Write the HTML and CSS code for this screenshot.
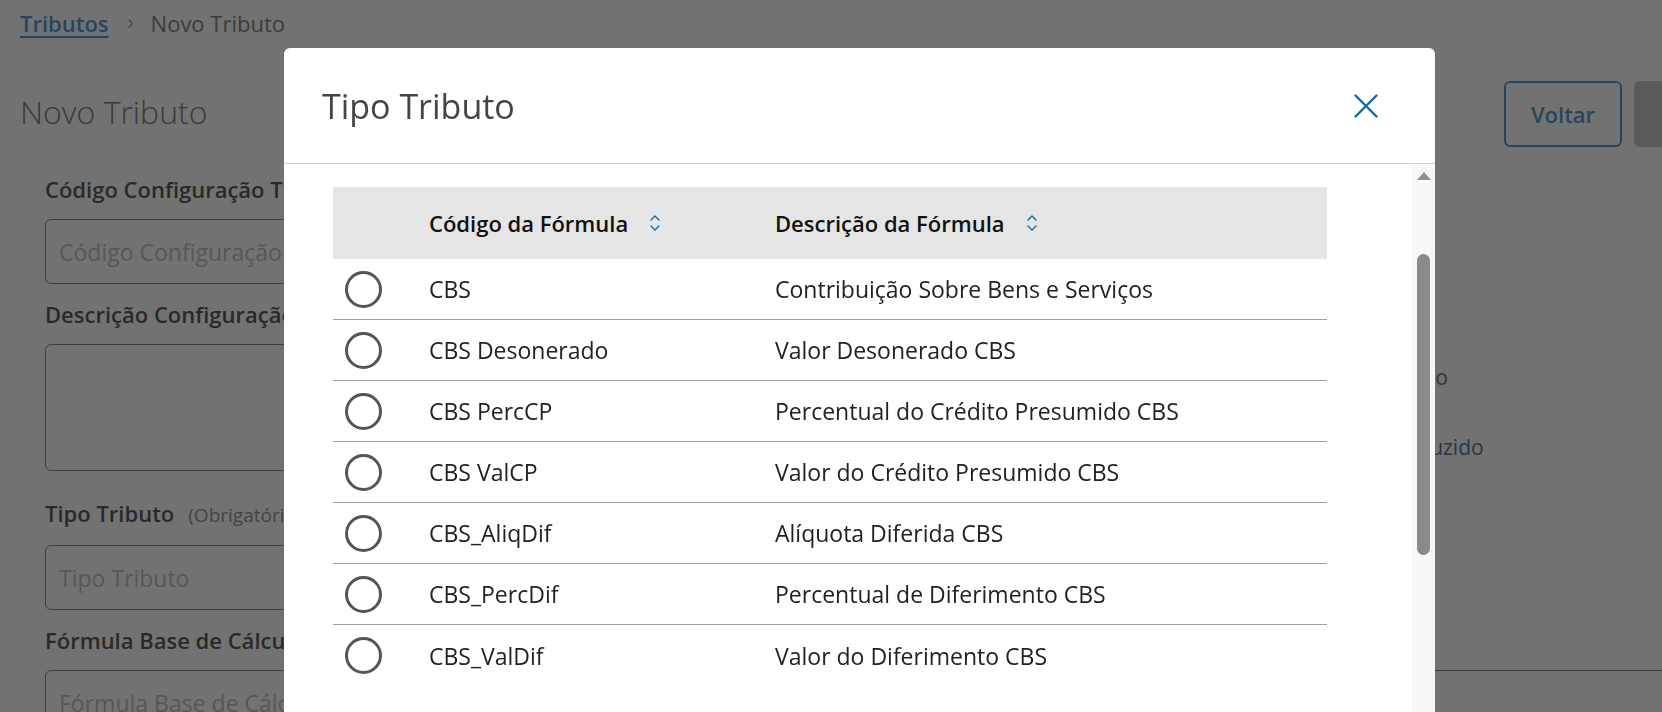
FILE: index.html
```html
<!DOCTYPE html>
<html lang="pt-BR">
<head>
<meta charset="utf-8">
<title>Novo Tributo</title>
<link rel="stylesheet" href="styles.css">
</head>
<body>
<div class="page">
  <nav class="breadcrumb">
    <a class="crumb-link" href="#">Tributos</a>
    <svg class="crumb-sep" width="7" height="11" viewBox="0 0 7 11"><path d="M1.5 1.5 L5.5 5.5 L1.5 9.5" fill="none" stroke="#8a8a8a" stroke-width="1.5"/></svg>
    <span class="crumb-current">Novo Tributo</span>
  </nav>
  <header class="page-head">
    <h1 class="page-title">Novo Tributo</h1>
    <div class="actions">
      <button class="btn btn-outline" type="button">Voltar</button>
      <button class="btn btn-solid" type="button">Salvar</button>
    </div>
  </header>
  <form class="form">
    <div class="form-row">
      <div class="form-col">
        <div class="field">
          <label class="field-label">Código Configuração Tributo</label>
          <input class="input" placeholder="Código Configuração Tributo">
        </div>
        <div class="field field-spaced">
          <label class="field-label">Descrição Configuração Tributo</label>
          <textarea class="input textarea"></textarea>
        </div>
        <div class="field">
          <label class="field-label">Tipo Tributo<span class="optional">(Obrigatório)</span></label>
          <input class="input" placeholder="Tipo Tributo">
        </div>
      </div>
      <div class="form-col side">
        <span class="field-label">Cálculo</span>
        <div class="options">
          <label class="option"><span class="option-dot"></span>Cálculo Pleno</label>
          <label class="option"><span class="option-dot"></span>Cálculo Reduzido</label>
        </div>
      </div>
    </div>
    <div class="field field-full">
      <label class="field-label">Fórmula Base de Cálculo</label>
      <input class="input" placeholder="Fórmula Base de Cálculo">
    </div>
  </form>
</div>

<div class="overlay"></div>

<section class="modal" role="dialog" aria-label="Tipo Tributo">
  <header class="modal-head">
    <h2 class="modal-title">Tipo Tributo</h2>
    <button class="modal-close" type="button" aria-label="Fechar">
      <svg width="24" height="24" viewBox="0 0 24 24"><path d="M1.5 1.5 L22.5 22.5 M22.5 1.5 L1.5 22.5" stroke="#0b69a3" stroke-width="2.3" stroke-linecap="round" fill="none"/></svg>
    </button>
  </header>
  <div class="modal-body">
    <div class="modal-content">
      <div class="table">
        <div class="thead row-grid">
          <div></div>
          <div class="th">Código da Fórmula
            <svg class="sort" width="10" height="18" viewBox="0 0 10 18"><path d="M1 6 L5 2 L9 6 M1 12 L5 16 L9 12" fill="none" stroke="#0b69a3" stroke-width="1.3" stroke-linecap="round" stroke-linejoin="round"/></svg>
          </div>
          <div class="th">Descrição da Fórmula
            <svg class="sort" width="10" height="18" viewBox="0 0 10 18"><path d="M1 6 L5 2 L9 6 M1 12 L5 16 L9 12" fill="none" stroke="#0b69a3" stroke-width="1.3" stroke-linecap="round" stroke-linejoin="round"/></svg>
          </div>
        </div>
        <div class="tr row-grid"><span class="radio"></span><span class="td">CBS</span><span class="td">Contribuição Sobre Bens e Serviços</span></div>
        <div class="tr row-grid"><span class="radio"></span><span class="td">CBS Desonerado</span><span class="td">Valor Desonerado CBS</span></div>
        <div class="tr row-grid"><span class="radio"></span><span class="td">CBS PercCP</span><span class="td">Percentual do Crédito Presumido CBS</span></div>
        <div class="tr row-grid"><span class="radio"></span><span class="td">CBS ValCP</span><span class="td">Valor do Crédito Presumido CBS</span></div>
        <div class="tr row-grid"><span class="radio"></span><span class="td">CBS_AliqDif</span><span class="td">Alíquota Diferida CBS</span></div>
        <div class="tr row-grid"><span class="radio"></span><span class="td">CBS_PercDif</span><span class="td">Percentual de Diferimento CBS</span></div>
        <div class="tr row-grid"><span class="radio"></span><span class="td">CBS_ValDif</span><span class="td">Valor do Diferimento CBS</span></div>
      </div>
    </div>
    <div class="scrollbar">
      <span class="scroll-arrow"></span>
      <span class="scroll-thumb"></span>
    </div>
  </div>
</section>
</body>
</html>
```

FILE: styles.css
```css
* { box-sizing: border-box; }

html, body {
  margin: 0;
  height: 100%;
  overflow: hidden;
}

body {
  font-family: "Open Sans", "Noto Sans", sans-serif;
  background: #fff;
  color: #333;
}

/* ---------- underlying page ---------- */
.page {
  width: 1804px;
  padding: 7px 20px 0;
}

.breadcrumb {
  display: flex;
  align-items: center;
  height: 32px;
  font-size: 22px;
  line-height: 32px;
}

.crumb-link {
  color: #2a7fc0;
  font-weight: 600;
  text-decoration: underline;
  text-decoration-thickness: 2px;
  text-underline-offset: 4px;
}

.crumb-sep { margin: 0 17px 0 18px; }

.crumb-current { color: #666; }

.page-head {
  display: flex;
  align-items: center;
  justify-content: space-between;
  margin-top: 42px;
}

.page-title {
  margin: 0;
  padding-bottom: 6px;
  font-size: 32px;
  font-weight: 300;
  line-height: 45px;
  color: #5e5e5e;
}

.actions {
  display: flex;
  gap: 12px;
}

.btn {
  width: 118px;
  height: 66px;
  border-radius: 6px;
  font: 600 22px "Open Sans", sans-serif;
}

.btn-outline {
  background: #fff;
  border: 2px solid #2a7fc0;
  color: #2a7fc0;
}

.btn-solid {
  width: 150px;
  background: #bababa;
  border: 0;
  color: #fff;
}

.form {
  margin: 27px 0 0;
  padding: 0 25px;
}

.form-row {
  display: grid;
  grid-template-columns: 1196px 1fr;
  gap: 40px;
}

.form-col {
  display: flex;
  flex-direction: column;
  gap: 15px;
}

.field {
  display: flex;
  flex-direction: column;
  gap: 15px;
}

.field-spaced { margin-bottom: 12px; }

.field-full { margin-top: 15px; }

.field-label {
  font-size: 22px;
  font-weight: 600;
  line-height: 30px;
  color: #2e2e2e;
}

.optional {
  margin-left: 14px;
  font-size: 19px;
  font-weight: 400;
  color: #7a7a7a;
}

.input {
  height: 65px;
  border: 1px solid #6c6c6c;
  border-radius: 6px;
  padding: 0 13px;
  font: 23px "Open Sans", sans-serif;
  color: #333;
  background: #fff;
}

.input::placeholder { color: #b3b3b3; }

.textarea {
  height: 127px;
  resize: none;
}

.side {
  padding-top: 126px;
  gap: 0;
}

.options {
  display: flex;
  flex-direction: column;
  gap: 30px;
  margin-top: 27px;
}

.option {
  display: flex;
  align-items: center;
  gap: 15px;
  height: 40px;
  font-size: 21px;
  color: #2b5680;
}

.option-dot {
  width: 20px;
  height: 20px;
  border: 2px solid #6c6c6c;
  border-radius: 50%;
}

/* ---------- overlay ---------- */
.overlay {
  position: fixed;
  inset: 0;
  background: rgba(38, 38, 38, 0.65);
}

/* ---------- modal ---------- */
.modal {
  position: fixed;
  left: 284px;
  top: 48px;
  width: 1151px;
  height: 700px;
  display: flex;
  flex-direction: column;
  background: #fff;
  border-radius: 6px;
  overflow: hidden;
}

.modal-head {
  flex: none;
  display: flex;
  align-items: center;
  justify-content: space-between;
  height: 116px;
  padding: 0 49px 0 38px;
  border-bottom: 1px solid #cfcfcf;
}

.modal-title {
  margin: 0;
  font-size: 34px;
  font-weight: 400;
  line-height: 46px;
  color: #454545;
}

.modal-close {
  width: 40px;
  height: 40px;
  padding: 0;
  border: 0;
  background: none;
  display: flex;
  align-items: center;
  justify-content: center;
}

.modal-body {
  flex: 1;
  min-height: 0;
  display: flex;
}

.modal-content {
  flex: 1;
  padding: 23px 85px 0 49px;
  overflow: hidden;
}

.scrollbar {
  flex: none;
  width: 23px;
  display: flex;
  flex-direction: column;
  align-items: center;
  padding-top: 8px;
  background: #f8f8f8;
}

.scroll-arrow {
  width: 0;
  height: 0;
  border-left: 7.5px solid transparent;
  border-right: 7.5px solid transparent;
  border-bottom: 8px solid #8f8f8f;
}

.scroll-thumb {
  width: 13px;
  height: 301px;
  margin-top: 74px;
  border-radius: 7px;
  background: #8a8a8a;
}

/* ---------- table ---------- */
.row-grid {
  display: grid;
  grid-template-columns: 96px 346px 1fr;
  align-items: center;
}

.thead {
  height: 72px;
  background: #e5e5e5;
}

.th {
  display: flex;
  align-items: center;
  gap: 22px;
  font-size: 22px;
  font-weight: 600;
  color: #111;
}

.tr {
  height: 61px;
  border-bottom: 1px solid #9e9e9e;
}

.tr:last-child { border-bottom: 0; }

.radio {
  width: 37px;
  height: 37px;
  margin-left: 12px;
  border: 3px solid #555;
  border-radius: 50%;
}

.td {
  font-size: 23px;
  color: #222;
}
```
